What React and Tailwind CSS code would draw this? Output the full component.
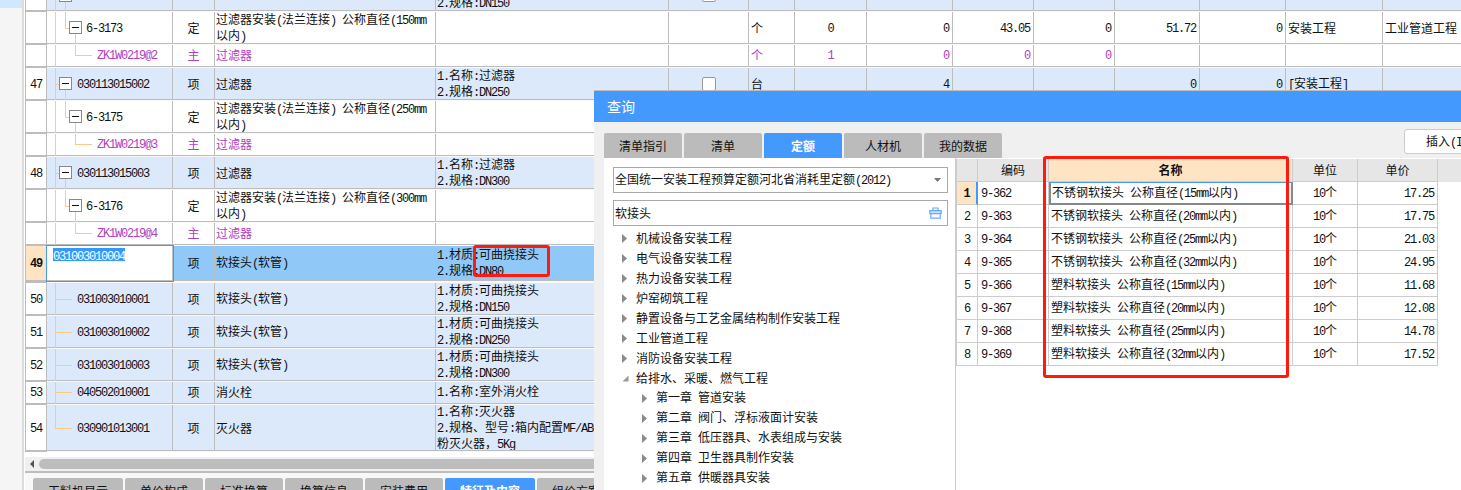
import React from "react";

const CJK = '"Noto Sans CJK SC", sans-serif';

function T({ children, className = "" }) {
  const parts = String(children).split(/([\x00-\x7f]+)/).filter(Boolean);
  return (
    <span className={"whitespace-pre " + className}>
      {parts.map((p, i) =>
        /^[\x00-\x7f]/.test(p) ? (
          <span key={i} className="font-['Liberation_Mono',monospace] tracking-[-1.2px]">{p}</span>
        ) : (
          <span key={i}>{p}</span>
        )
      )}
    </span>
  );
}

function Lines({ lines, className = "" }) {
  return (
    <div className={"flex flex-col leading-[14px] " + className}>
      {lines.map((l, i) => (
        <T key={i}>{l}</T>
      ))}
    </div>
  );
}

const V = ({ className }) => <div className={"absolute w-px bg-[#fdc98a] " + className} />;
const H = ({ className }) => <div className={"absolute h-px top-1/2 bg-[#fdc98a] " + className} />;

function Box({ className }) {
  return (
    <div className={"absolute w-[13px] h-[13px] border border-[#888] bg-white flex items-center justify-center z-[1] " + className}>
      <div className="w-[7px] h-px bg-[#111]" />
    </div>
  );
}

function CodeCell({ kind, code, last, purple, first }) {
  if (kind === "selected") {
    return (
      <div className="relative z-10 bg-white outline-1 outline-[#4499ee] pl-[6px] pt-[2px] border-r border-b border-[#bdbdbd] leading-[14px]">
        <span className="bg-[#3399ff] text-white inline-block h-[13px] leading-[13px]"><T>{code}</T></span>
      </div>
    );
  }
  return (
    <div className={"relative flex items-center border-r border-b border-[#bdbdbd] " + (kind === "item" ? "pl-[30px]" : kind === "leaf" ? "pl-[30px]" : kind === "sub" ? "pl-[39px]" : "pl-[50px]")}>
      <V className={"left-[8px] top-0 " + (last ? "h-1/2" : "-bottom-px")} />
      {kind === "item" && !first && (
        <>
          <H className="left-[8px] w-[4px]" />
          <V className="left-[18px] top-1/2 -bottom-px" />
          <Box className="left-[12px] top-[calc(50%-7px)]" />
        </>
      )}
      {kind === "item" && first && (
        <>
          <V className="left-[18px] top-0 -bottom-px" />
          <Box className="left-[12px] top-[-11px]" />
        </>
      )}
      {kind === "leaf" && <H className="left-[8px] w-[17px]" />}
      {kind === "sub" && (
        <>
          <V className="left-[18px] top-0 h-1/2" />
          <H className="left-[18px] w-[4px]" />
          <V className="left-[28px] top-1/2 -bottom-px" />
          <Box className="left-[22px] top-[calc(50%-7px)]" />
        </>
      )}
      {kind === "mat" && (
        <>
          <V className="left-[28px] top-0 h-1/2" />
          <H className="left-[28px] w-[17px]" />
        </>
      )}
      <span className={purple ? "text-[#b040c0]" : ""}><T>{code}</T></span>
    </div>
  );
}

const COLS = "grid grid-cols-[22px_126px_42px_221px_233px_80px_46px_72px_86px_81px_81px_85px_86px_97px_79px]";
const cell = "border-r border-b border-[#bdbdbd] flex items-center ";

function Row({ h, num, kind, code, type, name, feat, check, vals = [], last, first }) {
  const purple = kind === "mat";
  const color = purple ? "text-[#b040c0]" : "text-[#111]";
  const sel = kind === "selected";
  const rowBg = sel ? "bg-[#90c8f8]" : kind === "item" || kind === "leaf" ? "bg-[#dce9fb]" : "bg-white";
  return (
    <div className={COLS + " " + color + " " + h}>
      <div className={cell + "border-l justify-center text-[#111] " + (sel ? "bg-[#ffe4c4] font-bold" : "bg-white")}>
        <T>{num}</T>
      </div>
      <div className={rowBg + " grid"}>
        <CodeCell kind={kind} code={code} last={last} purple={purple} first={first} />
      </div>
      <div className={rowBg + " " + cell + "justify-center overflow-hidden"}>{type}</div>
      <div className={rowBg + " " + cell + "pl-px overflow-hidden"}>
        <Lines lines={name} />
      </div>
      <div className={rowBg + " " + cell + "pl-px overflow-hidden " + (first ? "items-start" : "")}>
        <Lines lines={feat} className={first ? "-mt-[21px]" : ""} />
      </div>
      <div className={rowBg + " " + cell + "justify-center overflow-hidden " + (first ? "items-start" : "")}>
        {check && <div className={"w-[14px] h-[14px] border border-[#999] rounded-[2px] bg-white " + (first ? "-mt-[12px]" : "")} />}
      </div>
      <div className={rowBg + " " + cell + "pl-[2px] overflow-hidden"}>{vals[0]}</div>
      <div className={rowBg + " " + cell + "justify-center"}><T>{vals[1] ?? ""}</T></div>
      {[2, 3, 4, 5, 6].map((i) => (
        <div key={i} className={rowBg + " " + cell + "justify-end pr-[3px]"}><T>{vals[i] ?? ""}</T></div>
      ))}
      <div className={rowBg + " " + cell + "pl-[2px] overflow-hidden"}><T>{vals[7] ?? ""}</T></div>
      <div className={rowBg + " " + cell + "pl-[2px] overflow-hidden"}><T>{vals[8] ?? ""}</T></div>
      <div className={rowBg + " border-b border-[#bdbdbd]"} />
    </div>
  );
}

const filterSub = (n) => ["过滤器安装(法兰连接) 公称直径(" + n + "mm", "以内)"];
const mainRows = [
  { h: "h-[12px]", first: true, num: "", kind: "item", code: "", type: "", name: [], feat: ["1.名称:过滤器", "2.规格:DN150"], check: true },
  { h: "h-[33px]", num: "", kind: "sub", code: "6-3173", type: "定", name: filterSub(150), feat: [], vals: ["个", "0", "0", "43.05", "0", "51.72", "0", "安装工程", "工业管道工程"] },
  { h: "h-[23px]", num: "", kind: "mat", code: "ZK1W0219@2", type: "主", name: ["过滤器"], feat: [], vals: ["个", "1", "0", "0", "0"] },
  { h: "h-[33px]", num: "47", kind: "item", code: "030113015002", type: "项", name: ["过滤器"], feat: ["1.名称:过滤器", "2.规格:DN250"], check: true, vals: ["台", "", "4", "", "", "0", "0", "[安装工程]"] },
  { h: "h-[33px]", num: "", kind: "sub", code: "6-3175", type: "定", name: filterSub(250), feat: [] },
  { h: "h-[23px]", num: "", kind: "mat", code: "ZK1W0219@3", type: "主", name: ["过滤器"], feat: [] },
  { h: "h-[33px]", num: "48", kind: "item", code: "030113015003", type: "项", name: ["过滤器"], feat: ["1.名称:过滤器", "2.规格:DN300"] },
  { h: "h-[33px]", num: "", kind: "sub", code: "6-3176", type: "定", name: filterSub(300), feat: [] },
  { h: "h-[23px]", num: "", kind: "mat", code: "ZK1W0219@4", type: "主", name: ["过滤器"], feat: [] },
  { h: "h-[37px]", num: "49", kind: "selected", code: "031003010004", type: "项", name: ["软接头(软管)"], feat: ["1.材质:可曲挠接头", "2.规格:DN80"] },
  { h: "h-[33px]", num: "50", kind: "leaf", code: "031003010001", type: "项", name: ["软接头(软管)"], feat: ["1.材质:可曲挠接头", "2.规格:DN150"] },
  { h: "h-[33px]", num: "51", kind: "leaf", code: "031003010002", type: "项", name: ["软接头(软管)"], feat: ["1.材质:可曲挠接头", "2.规格:DN250"] },
  { h: "h-[33px]", num: "52", kind: "leaf", code: "031003010003", type: "项", name: ["软接头(软管)"], feat: ["1.材质:可曲挠接头", "2.规格:DN300"] },
  { h: "h-[23px]", num: "53", kind: "leaf", code: "040502010001", type: "项", name: ["消火栓"], feat: ["1.名称:室外消火栓"] },
  { h: "h-[47px]", num: "54", kind: "leaf", last: true, code: "030901013001", type: "项", name: ["灭火器"], feat: ["1.名称:灭火器", "2.规格、型号:箱内配置MF/ABC3干", "粉灭火器，5Kg"] },
];

const bottomTabs = [
  ["工料机显示", "w-[90px]"],
  ["单价构成", "w-[78px]"],
  ["标准换算", "w-[78px]"],
  ["换算信息", "w-[78px]"],
  ["安装费用", "w-[78px]"],
  ["特征及内容", "w-[90px]", true],
  ["组价方案", "w-[78px]"],
];

const dialogTabs = [["清单指引"], ["清单"], ["定额", true], ["人材机"], ["我的数据"]];

const tree = [
  [0, "机械设备安装工程"],
  [0, "电气设备安装工程"],
  [0, "热力设备安装工程"],
  [0, "炉窑砌筑工程"],
  [0, "静置设备与工艺金属结构制作安装工程"],
  [0, "工业管道工程"],
  [0, "消防设备安装工程"],
  [0, "给排水、采暖、燃气工程", true],
  [1, "第一章 管道安装"],
  [1, "第二章 阀门、浮标液面计安装"],
  [1, "第三章 低压器具、水表组成与安装"],
  [1, "第四章 卫生器具制作安装"],
  [1, "第五章 供暖器具安装"],
];

const quotaRows = [
  ["9-362", "不锈钢软接头 公称直径(15mm以内)", "17.25"],
  ["9-363", "不锈钢软接头 公称直径(20mm以内)", "17.75"],
  ["9-364", "不锈钢软接头 公称直径(25mm以内)", "21.03"],
  ["9-365", "不锈钢软接头 公称直径(32mm以内)", "24.95"],
  ["9-366", "塑料软接头 公称直径(15mm以内)", "11.68"],
  ["9-367", "塑料软接头 公称直径(20mm以内)", "12.08"],
  ["9-368", "塑料软接头 公称直径(25mm以内)", "14.78"],
  ["9-369", "塑料软接头 公称直径(32mm以内)", "17.52"],
];

const QCOLS = "grid grid-cols-[22px_71px_244px_65px_80px] h-[23px]";
const qc = "border-r border-b border-[#ccc] flex items-center ";

function Arrow({ open }) {
  return open ? (
    <svg width="7" height="7" viewBox="0 0 7 7" className="block"><path d="M6.5 0.5V6.5H0.5Z" fill="#999" /></svg>
  ) : (
    <svg width="5" height="9" viewBox="0 0 5 9" className="block"><path d="M0 0L5 4.5L0 9Z" fill="#8a8a8a" /></svg>
  );
}

function Dialog() {
  return (
    <div className="absolute left-[594px] top-[90px] w-[867px] h-[400px] bg-[#f0f0f0] border-t border-[#bdbdbd] overflow-hidden flex flex-col">
      <div className="h-[31px] bg-[#4499ff] text-white text-[14px] flex items-center pl-[13px] shrink-0">查询</div>
      <div className="h-[36px] flex items-end pl-[10px] gap-[2px] shrink-0">
        {dialogTabs.map(([t, on]) => (
          <div key={t} className={"w-[78px] h-[25px] shrink-0 rounded-t-[2px] flex items-center justify-center " + (on ? "bg-[#4499ff] text-white font-bold" : "bg-[#bbb] text-[#111]")}>{t}</div>
        ))}
        <div className="ml-[400px] mb-[4px] w-[80px] h-[25px] shrink-0 bg-white border border-[#ccc] rounded-[3px] pl-[21px] flex items-center text-[#111]">
          <T>插入(I)</T>
        </div>
      </div>
      <div className="flex flex-1 ml-[10px] min-h-0">
        <div className="w-[352px] bg-white border-r border-[#ccc] pt-[9px] pl-[9px] shrink-0 flex flex-col">
          <div className="w-[335px] h-[26px] border border-[#aaa] flex items-center justify-between pl-px pr-[6px] text-[#111]">
            <T>全国统一安装工程预算定额河北省消耗里定额(2012)</T>
            <svg width="7" height="4" viewBox="0 0 7 4"><path d="M0 0H7L3.5 4Z" fill="#777" /></svg>
          </div>
          <div className="w-[335px] h-[26px] mt-[7px] border border-[#aaa] flex items-center justify-between pl-px pr-[5px] text-[#111]">
            <span>软接头</span>
            <svg width="13" height="12" viewBox="0 0 13 12" fill="none" stroke="#66aaff" strokeWidth="1.2">
              <path d="M4 3V1H9V3" />
              <path d="M0.8 3.6H12.2V6.6H0.8Z" fill="#cfe3ff" />
              <path d="M1.8 6.6V11.2H11.2V6.6" />
            </svg>
          </div>
          <div className="mt-[2px] flex flex-col">
            {tree.map(([lvl, t, open]) => (
              <div key={t} className={"h-[20px] flex items-center text-[#111] " + (lvl ? "pl-[29px]" : "pl-[9px]")}>
                <span className="w-[14px] shrink-0 flex items-center"><Arrow open={open} /></span>
                <span className="whitespace-pre"><T>{t}</T></span>
              </div>
            ))}
          </div>
        </div>
        <div className="flex-1 bg-white pt-[1px] text-[#111]">
          <div className={QCOLS + " bg-[#e6e6e6]"}>
            <div className={qc + "border-l"} />
            <div className={qc + "justify-center"}>编码</div>
            <div className={qc + "justify-center font-bold bg-[#ffe4c4]"}>名称</div>
            <div className={qc + "justify-center"}>单位</div>
            <div className={qc + "justify-center"}>单价</div>
          </div>
          {quotaRows.map(([c, n, p], i) => (
            <div key={c} className={QCOLS}>
              <div className={qc + "border-l justify-center " + (i === 0 ? "bg-[#ffe4c4] font-bold border-r-2 border-r-[#4499ff]" : "")}><T>{String(i + 1)}</T></div>
              <div className={qc + "pl-[3px]"}><T>{c}</T></div>
              <div className={i === 0 ? "border-x-2 border-b-2 border-[#888] border-t border-t-[#4499ff] flex items-center pl-[1px]" : qc + "pl-[2px]"}><T>{n}</T></div>
              <div className={qc + "justify-center"}><T>10个</T></div>
              <div className={qc + "justify-end pr-[3px]"}><T>{p}</T></div>
            </div>
          ))}
        </div>
      </div>
      <div className="absolute left-[449px] top-[65px] w-[246px] h-[222px] border-[3px] border-[#ff1a0d] rounded-[3px]" />
    </div>
  );
}

export default function App() {
  return (
    <div className="relative w-[1461px] h-[490px] overflow-hidden bg-white flex text-[12px] text-[#111]" style={{ fontFamily: CJK }}>
      <div className="w-[22px] shrink-0 bg-[#f5f5f5]">
        <div className="h-[8px] bg-[#cfe8ff]" />
      </div>
      <div className="w-[2px] shrink-0 bg-[#dcdcdc]" />
      <div className="w-px shrink-0 bg-white" />
      <div className="relative flex-1 min-w-0 flex flex-col bg-[#f8f8f8]">
        <div>
          {mainRows.map((r, i) => (
            <Row key={i} {...r} />
          ))}
        </div>
        <div className="h-[5px] bg-white shrink-0" />
        <div className="h-[14px] bg-[#f0f0f0] shrink-0 flex items-center pl-[5px] gap-[5px]">
          <svg width="4" height="8" viewBox="0 0 4 8"><path d="M4 0V8L0 4Z" fill="#555" /></svg>
          <div className="flex-1 h-[10px] bg-[#bdbdbd] rounded-l-[5px]" />
        </div>
        <div className="h-[2px] bg-[#bdbdbd] shrink-0" />
        <div className="h-[5px] shrink-0" />
        <div className="flex gap-[2px] pl-[8px] shrink-0">
          {bottomTabs.map(([t, w, on]) => (
            <div key={t} className={w + " h-[26px] shrink-0 rounded-t-[2px] flex items-center justify-center " + (on ? "bg-[#4499ff] text-white font-bold" : "bg-[#bbb] text-[#111]")}>{t}</div>
          ))}
        </div>
        <div className="absolute left-[448px] top-[245px] w-[77px] h-[32px] border-[3px] border-[#ff1a0d] rounded-[3px]" />
      </div>
      <Dialog />
    </div>
  );
}
